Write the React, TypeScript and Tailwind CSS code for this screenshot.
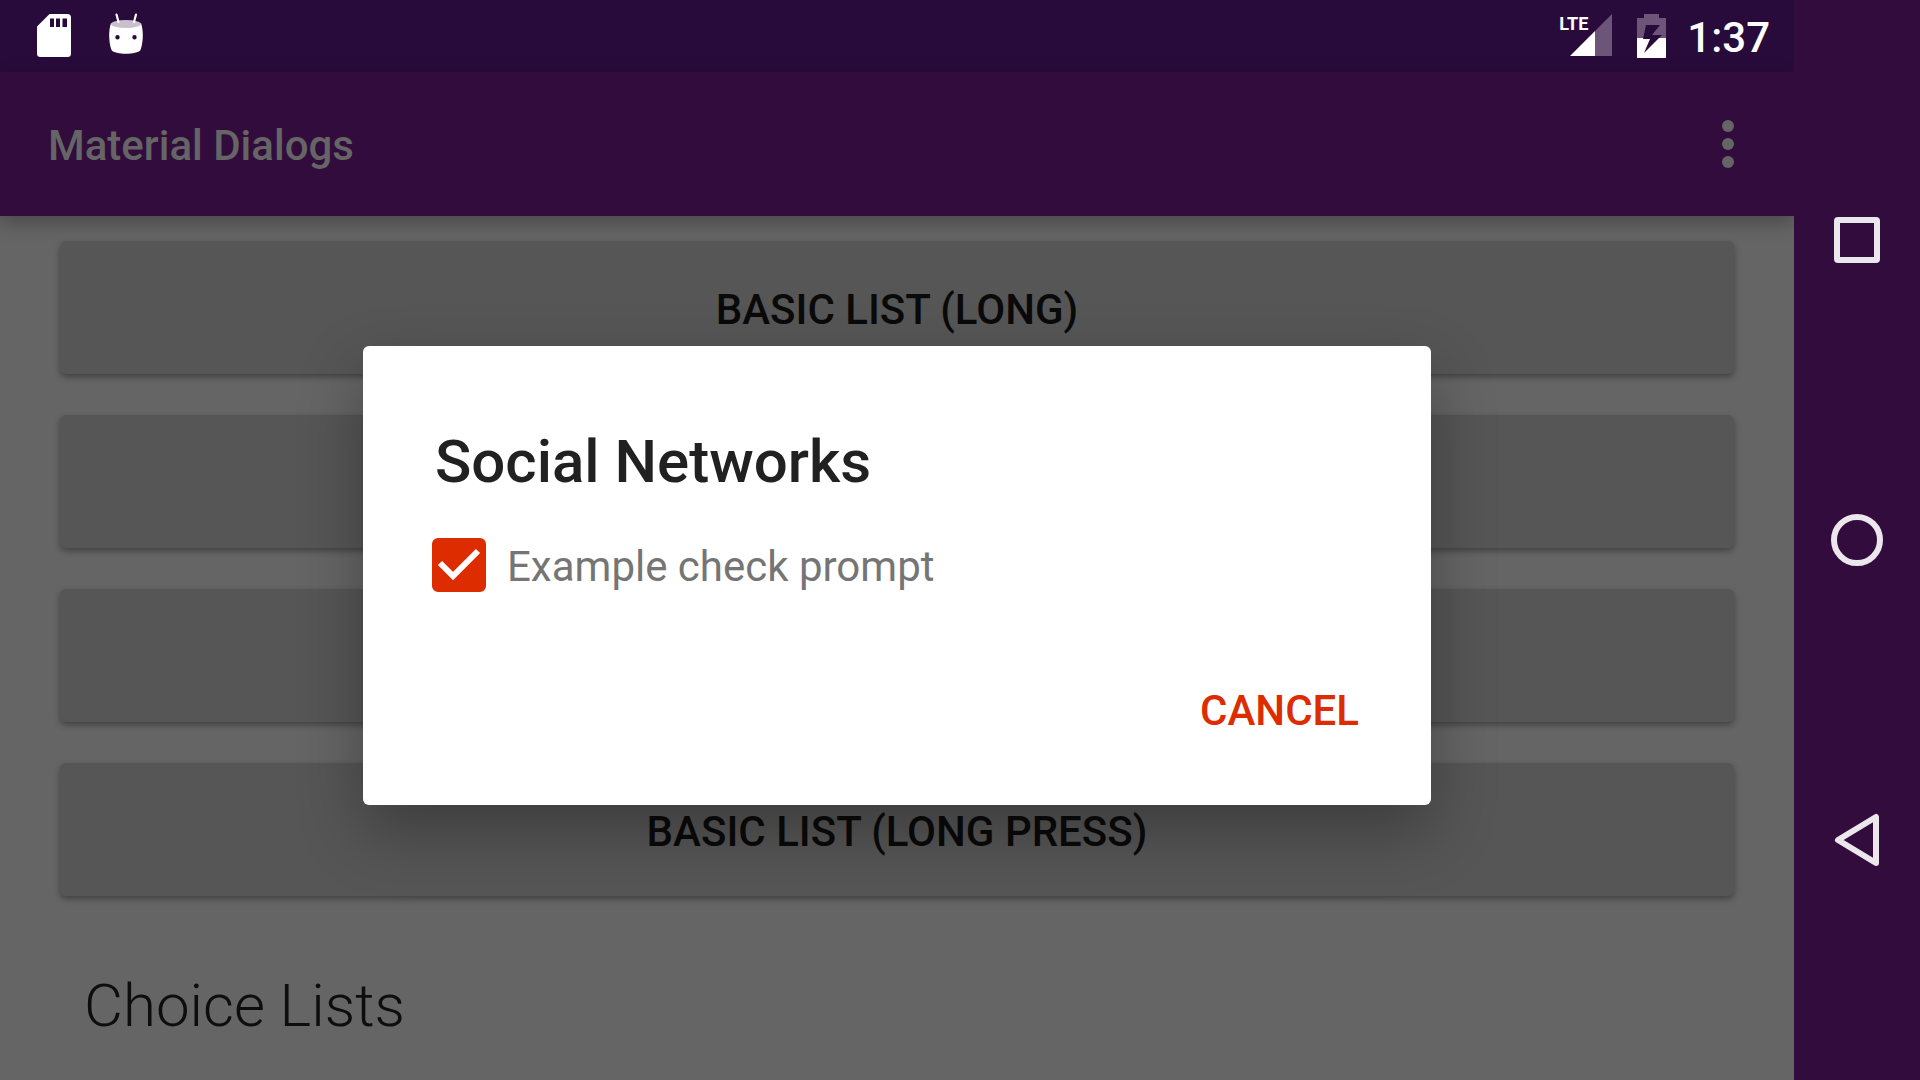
import React from "react";

const listButtons = ["Basic List (Long)", "", "", "Basic List (Long Press)"];

function StatusBar() {
  return (
    <div className="flex h-[72px] shrink-0 items-center justify-between bg-[#280b3a] pl-[37px] pr-[24px] text-white">
      <div className="flex items-center gap-[38px] pb-px">
        <svg width="34" height="43" viewBox="0 0 34 43" aria-hidden="true">
          <path
            fillRule="evenodd"
            fill="#fff"
            d="M12.500 0H30.500a3.500 3.500 0 0 1 3.500 3.500V39.500a3.500 3.500 0 0 1-3.500 3.500H3.500A3.500 3.500 0 0 1 0 39.500V12.500ZM13 4.500V13H17V4.500ZM19 4.500V13H23V4.500ZM25.500 4.500V13H30V4.500Z"
          />
        </svg>
        <svg width="34" height="46" viewBox="0 0 34 46" aria-hidden="true">
          <path
            fillRule="evenodd"
            fill="#fff"
            d="M2 10C6 15 28 15 32 10C34.500 17 34.500 29 31.500 37C28 42 6 42 2.500 37C-.5 29-.5 17 2 10ZM8.500 22a2.200 2.200 0 1 0 0 4.400a2.200 2.200 0 1 0 0-4.400ZM25.500 22a2.200 2.200 0 1 0 0 4.400a2.200 2.200 0 1 0 0-4.400Z"
          />
          <ellipse cx="17" cy="11" rx="15" ry="4" fill="#c9bfce" />
          <path d="M7.500 1.500L9.500 9M27 1.500L25 9" stroke="#fff" strokeWidth="2.200" strokeLinecap="round" />
        </svg>
      </div>
      <div className="flex items-center">
        <div className="relative">
          <svg width="54" height="44" viewBox="0 0 54 44" aria-hidden="true">
            <path d="M53 0V42H36V17Z" fill="#6c5578" />
            <path d="M36 17V42H11Z" fill="#fff" />
          </svg>
          <span className="absolute left-0 top-0 text-[18px] font-bold leading-[20px]">LTE</span>
        </div>
        <svg className="ml-[24px]" width="29" height="44" viewBox="0 0 29 44" aria-hidden="true">
          <path d="M7 0H22V4H29V24H0V4H7Z" fill="#6c5578" />
          <path d="M0 24H29V44H0Z" fill="#fff" />
          <path d="M9 11H23L15 21H25L7 39L13 25H6Z" fill="#280b3a" />
        </svg>
        <span className="ml-[21px] pt-[3px] text-[42px] font-medium leading-[48px]">1:37</span>
      </div>
    </div>
  );
}

function AppBar() {
  return (
    <header className="flex h-[144px] shrink-0 items-center justify-between bg-[#310c3d] pl-12 pr-[48px] text-[#656565] shadow-[0_6px_18px_rgba(0,0,0,0.3)]">
      <h1 className="pt-[4px] text-[42px] font-medium leading-[48px]">Material Dialogs</h1>
      <button type="button" aria-label="More options" className="flex w-9 flex-col items-center gap-[6px]">
        <span className="size-3 rounded-full bg-[#656565]" />
        <span className="size-3 rounded-full bg-[#656565]" />
        <span className="size-3 rounded-full bg-[#656565]" />
      </button>
    </header>
  );
}

function CheckPromptDialog() {
  return (
    <div
      role="dialog"
      aria-labelledby="dialog-title"
      className="w-[1068px] rounded-[6px] bg-white px-[72px] pb-[67px] pt-[80px] shadow-[0_26px_64px_rgba(0,0,0,0.3)]"
    >
      <h2 id="dialog-title" className="text-[60px] font-medium leading-[72px] text-[#212121]">
        Social Networks
      </h2>
      <label className="-ml-[3px] mt-[38px] flex items-center gap-[21px] text-[42px] leading-[54px] text-[#757575]">
        <span className="grid size-[54px] shrink-0">
          <input
            type="checkbox"
            defaultChecked
            className="peer col-start-1 row-start-1 size-[54px] appearance-none rounded-[6px] border-[6px] border-[#757575] checked:border-[#dd2c00] checked:bg-[#dd2c00]"
          />
          <svg
            className="pointer-events-none invisible col-start-1 row-start-1 peer-checked:visible"
            width="54"
            height="54"
            viewBox="0 0 54 54"
            aria-hidden="true"
          >
            <path d="M8 25L21 38L46 13" fill="none" stroke="#fff" strokeWidth="6" />
          </svg>
        </span>
        <span className="pt-[4px]">Example check prompt</span>
      </label>
      <div className="mt-[90px] flex justify-end">
        <button type="button" className="text-[42px] font-medium uppercase leading-[54px] text-[#dd2c00]">
          Cancel
        </button>
      </div>
    </div>
  );
}

function NavigationBar() {
  return (
    <nav className="flex w-[126px] shrink-0 flex-col items-center justify-center gap-[228px] bg-[#310c3d]">
      <button type="button" aria-label="Recent apps" className="size-[72px]">
        <svg width="72" height="72" viewBox="0 0 72 72" fill="none" stroke="#ebe7ec" strokeWidth="6" strokeLinejoin="round">
          <rect x="16" y="16" width="40" height="40" rx="1" />
        </svg>
      </button>
      <button type="button" aria-label="Home" className="size-[72px]">
        <svg width="72" height="72" viewBox="0 0 72 72" fill="none" stroke="#ebe7ec" strokeWidth="6">
          <circle cx="36" cy="36" r="23" />
        </svg>
      </button>
      <button type="button" aria-label="Back" className="size-[72px]">
        <svg width="72" height="72" viewBox="0 0 72 72" fill="none" stroke="#ebe7ec" strokeWidth="6" strokeLinejoin="round">
          <path d="M55 13V59L17 36Z" />
        </svg>
      </button>
    </nav>
  );
}

export default function App() {
  return (
    <div className="flex h-screen overflow-hidden bg-[#656565] font-[Roboto,sans-serif]">
      <div className="relative flex min-w-0 flex-1 flex-col overflow-hidden">
        <StatusBar />
        <AppBar />
        <main className="px-[60px] pt-[25px] text-[#0a0a0a]">
          <div className="flex flex-col gap-[41px]">
            {listButtons.map((label, i) => (
              <button
                key={i}
                type="button"
                aria-label={label || "List example"}
                className="h-[133px] rounded-[6px] bg-[#565656] pt-[4px] text-[42px] font-medium uppercase shadow-[0_3px_6px_rgba(0,0,0,0.35)]"
              >
                {label}
              </button>
            ))}
          </div>
          <h2 className="mt-[74px] pl-6 text-[60px] font-light leading-[72px] text-[#0d0d0d]">Choice Lists</h2>
        </main>
        <div className="absolute inset-0 flex items-center justify-center pt-[71px]">
          <CheckPromptDialog />
        </div>
      </div>
      <NavigationBar />
    </div>
  );
}
